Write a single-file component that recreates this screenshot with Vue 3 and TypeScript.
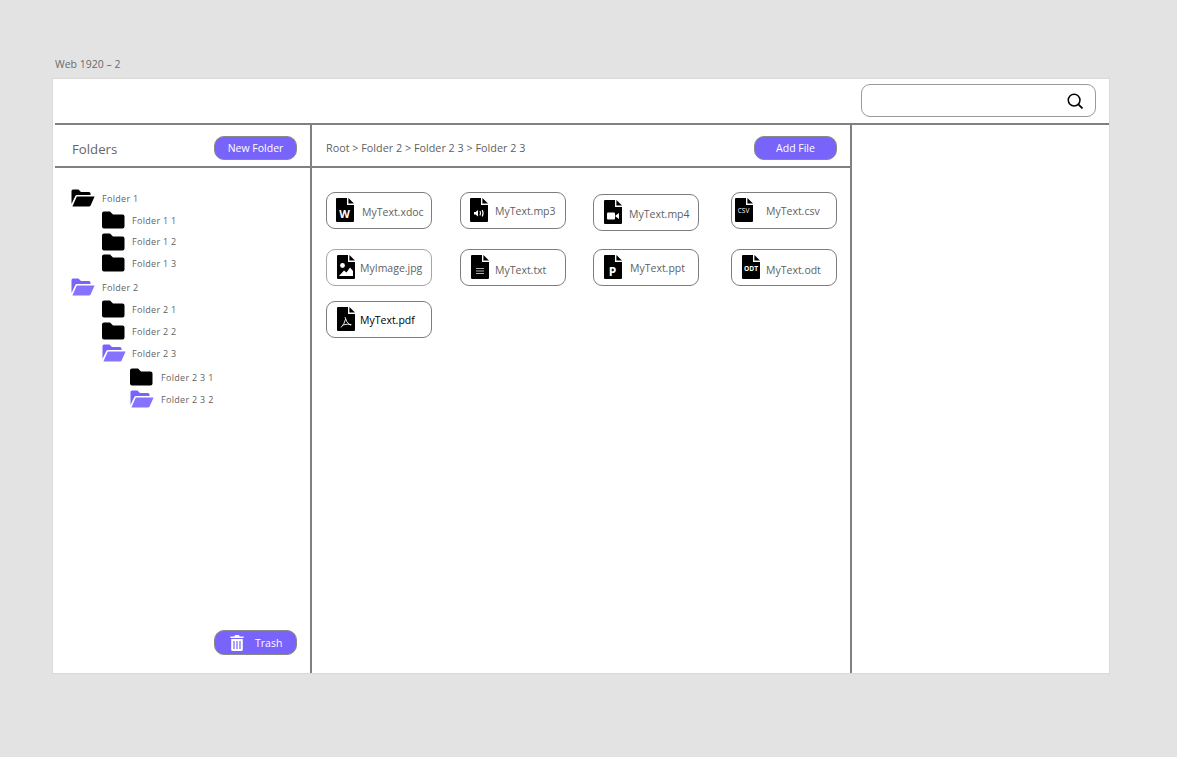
<template>
  <div class="page">
    <div class="frame-label">Web 1920 – 2</div>
    <div class="frame">
      <header class="topbar">
        <div class="search">
          <svg viewBox="0 0 18 18" width="16" height="16">
            <circle cx="8" cy="8" r="6.6" fill="none" stroke="#000" stroke-width="1.7" />
            <path d="M12.8 12.8 L16.8 16.8" stroke="#000" stroke-width="2" stroke-linecap="round" />
          </svg>
        </div>
      </header>
      <div class="columns">
        <aside class="sidebar">
          <div class="col-head">
            <span class="col-title">Folders</span>
            <button class="btn">New Folder</button>
          </div>
          <ul class="tree">
            <li
              v-for="f in folders"
              :key="f.name"
              class="tree-row"
              :class="[`depth-${f.depth}`, { tight: f.tight, spaced: f.spaced }]"
            >
              <svg class="folder" viewBox="0 0 24 18" width="24" height="18" :fill="f.active ? '#7864fb' : '#000'">
                <template v-if="f.open">
                  <path d="M0.5 2 Q0.5 0.5 2 0.5 H7.5 L10 3 H18 Q19.5 3 19.5 4.5 V6 H5.8 Q4.8 6 4.3 7 L0.5 15 Z" />
                  <path d="M5.8 7.4 H23.6 L19.6 16.4 Q19.2 17.5 18 17.5 H1.4 Z" :fill="f.active ? '#8572ff' : '#000'" />
                </template>
                <path v-else d="M2 0.5 H8 L11 3.5 H20.5 Q22.5 3.5 22.5 5.5 V15.5 Q22.5 17.5 20.5 17.5 H2 Q0 17.5 0 15.5 V2.5 Q0 0.5 2 0.5 Z" />
              </svg>
              <span class="tree-name">{{ f.name }}</span>
            </li>
          </ul>
          <div class="sidebar-foot">
            <button class="btn btn-trash">
              <svg viewBox="0 0 14 16" width="14" height="16" fill="#fff">
                <path d="M5 0 H9 L9.6 1.5 H13.6 V3 H0.4 V1.5 H4.4 Z" />
                <path d="M1.2 4 H12.8 V14.5 Q12.8 16 11.3 16 H2.7 Q1.2 16 1.2 14.5 Z M3.4 6 V14 H4.6 V6 Z M6.4 6 V14 H7.6 V6 Z M9.4 6 V14 H10.6 V6 Z" fill-rule="evenodd" />
              </svg>
              <span>Trash</span>
            </button>
          </div>
        </aside>

        <main class="main">
          <div class="col-head main-head">
            <span class="crumbs">Root &gt; Folder 2 &gt; Folder 2 3 &gt; Folder 2 3</span>
            <button class="btn">Add File</button>
          </div>
          <div class="files">
            <div
              v-for="file in files"
              :key="file.name"
              class="file-card"
              :class="file.cls"
              :style="{ paddingLeft: file.pad + 'px', gap: file.gap + 'px' }"
            >
              <svg class="doc" viewBox="0 0 18 24" width="18" height="24">
                <path d="M0 1 Q0 0 1 0 H11 V7 H18 V23 Q18 24 17 24 H1 Q0 24 0 23 Z" fill="#000" />
                <path d="M12.4 0 L18 5.6 H12.4 Z" fill="#000" />
                <text v-if="file.kind === 'word'" x="8.5" y="20" class="doc-letter" font-size="11">W</text>
                <text v-else-if="file.kind === 'ppt'" x="8.5" y="20.5" class="doc-letter" font-size="12">P</text>
                <text v-else-if="file.kind === 'csv'" x="8.5" y="15" class="doc-letter thin" font-size="6.5">CSV</text>
                <text v-else-if="file.kind === 'odt'" x="9" y="16" class="doc-letter" font-size="6.6">ODT</text>
                <g v-else-if="file.kind === 'audio'" fill="#fff">
                  <path d="M4 14 H5.6 L8 12 V18.5 L5.6 16.5 H4 Z" />
                  <path d="M10 13 Q11.2 15.3 10 17.5 M12.2 12 Q14 15.3 12.2 18.5" fill="none" stroke="#fff" stroke-width="1.1" />
                </g>
                <g v-else-if="file.kind === 'video'" fill="#fff">
                  <rect x="3" y="12.5" width="8" height="7" rx="1" />
                  <path d="M11.5 15.5 L15 13 V19 L11.5 16.5 Z" />
                </g>
                <g v-else-if="file.kind === 'image'" fill="#fff">
                  <circle cx="5.5" cy="10.5" r="2.4" />
                  <path d="M2 21 L7 15.5 L9.5 17.5 L13 12.5 L16 16 V21 Z" />
                </g>
                <path v-else-if="file.kind === 'text'" d="M5 13.5 H13 M5 16 H13 M5 18.5 H13" stroke="#c4c4c4" stroke-width="0.9" />
                <path v-else-if="file.kind === 'pdf'" d="M8 10 Q8.8 15 13.5 18.5 M8.6 12 Q7.5 17 4 20.5 M6 18 Q10 16.5 14.5 17.6" fill="none" stroke="#fff" stroke-width="0.9" />
              </svg>
              <span class="file-name">{{ file.name }}</span>
            </div>
          </div>
        </main>

        <section class="details"></section>
      </div>
    </div>
  </div>
</template>

<script setup lang="ts">
interface FolderRow {
  name: string;
  depth: number;
  open?: boolean;
  active?: boolean;
  tight?: boolean;
  spaced?: boolean;
}

interface FileItem {
  name: string;
  kind: string;
  pad: number;
  gap: number;
  cls?: string;
}

const folders: FolderRow[] = [
  { name: "Folder 1", depth: 0, open: true },
  { name: "Folder 1 1", depth: 1 },
  { name: "Folder 1 2", depth: 1, tight: true },
  { name: "Folder 1 3", depth: 1, tight: true },
  { name: "Folder 2", depth: 0, open: true, active: true, spaced: true },
  { name: "Folder 2 1", depth: 1 },
  { name: "Folder 2 2", depth: 1 },
  { name: "Folder 2 3", depth: 1, open: true, active: true },
  { name: "Folder 2 3 1", depth: 2, spaced: true },
  { name: "Folder 2 3 2", depth: 2, open: true, active: true },
];

const files: FileItem[] = [
  { name: "MyText.xdoc", kind: "word", pad: 9, gap: 8, cls: "drop-2" },
  { name: "MyText.mp3", kind: "audio", pad: 9, gap: 7 },
  { name: "MyText.mp4", kind: "video", pad: 10, gap: 7, cls: "shift drop-2" },
  { name: "MyText.csv", kind: "csv", pad: 3, gap: 13 },
  { name: "MyImage.jpg", kind: "image", pad: 10, gap: 5, cls: "light" },
  { name: "MyText.txt", kind: "text", pad: 10, gap: 6, cls: "drop-3" },
  { name: "MyText.ppt", kind: "ppt", pad: 10, gap: 8 },
  { name: "MyText.odt", kind: "odt", pad: 10, gap: 6, cls: "drop-3" },
  { name: "MyText.pdf", kind: "pdf", pad: 10, gap: 5, cls: "dark" },
];
</script>

<style scoped>
.page {
  width: 1177px;
  height: 757px;
  box-sizing: border-box;
  padding: 56px 67px 0 52px;
  background: #e3e3e3;
  font-family: "Open Sans", "Noto Sans", sans-serif;
  color: #5f5f5f;
  overflow: hidden;
}

.frame-label {
  height: 22px;
  box-sizing: border-box;
  padding: 1px 0 0 3px;
  font-size: 10.5px;
  line-height: 14px;
  color: #6a6a6a;
}

.frame {
  height: 596px;
  box-sizing: border-box;
  display: flex;
  flex-direction: column;
  background: #fff;
  border: 1px solid #d9d9d9;
  padding-left: 2px;
}

.topbar {
  height: 46px;
  flex: none;
  box-sizing: border-box;
  display: flex;
  justify-content: flex-end;
  padding: 5px 13px 0 0;
  border-bottom: 2px solid #808080;
}

.search {
  width: 235px;
  height: 33px;
  box-sizing: border-box;
  display: flex;
  align-items: center;
  justify-content: flex-end;
  padding-right: 12px;
  border: 1px solid #999;
  border-radius: 9px;
}

.columns {
  flex: 1;
  min-height: 0;
  display: flex;
}

.sidebar {
  width: 257px;
  flex: none;
  box-sizing: border-box;
  display: flex;
  flex-direction: column;
  border-right: 2px solid #808080;
}

.col-head {
  height: 43px;
  flex: none;
  box-sizing: border-box;
  display: flex;
  align-items: flex-start;
  justify-content: space-between;
  padding: 11px 13px 0 17px;
  border-bottom: 2px solid #808080;
}

.col-title {
  font-size: 13.2px;
  line-height: 26px;
  color: #666;
}

.btn {
  width: 83px;
  height: 24px;
  box-sizing: border-box;
  display: flex;
  align-items: center;
  justify-content: center;
  padding: 0;
  border: 1px solid #8a8a8a;
  border-radius: 10px;
  background: #7864fb;
  color: #fff;
  font-family: inherit;
  font-size: 10.5px;
}

.btn-trash {
  height: 25px;
  justify-content: flex-start;
  gap: 11px;
  padding-left: 15px;
}

.tree {
  list-style: none;
  margin: 0;
  padding: 19px 0 0 16px;
}

.tree-row {
  height: 22px;
  display: flex;
  align-items: center;
  gap: 7px;
}

.tree-row.tight {
  height: 21.5px;
}

.tree-row.spaced {
  margin-top: 2px;
}

.depth-1 {
  padding-left: 31px;
}

.tree-row.depth-1 {
  gap: 6px;
}

.depth-2 {
  padding-left: 59px;
}

.folder {
  flex: none;
}

.tree-name {
  font-size: 9px;
  letter-spacing: 0.3px;
  color: #5f5f5f;
}

.sidebar-foot {
  margin-top: auto;
  display: flex;
  justify-content: flex-end;
  padding: 0 13px 18px 0;
}

.main {
  width: 540px;
  flex: none;
  box-sizing: border-box;
  display: flex;
  flex-direction: column;
  border-right: 2px solid #808080;
}

.main-head {
  padding: 11px 13px 0 14px;
}

.crumbs {
  font-size: 10.8px;
  line-height: 24px;
  color: #5f5f5f;
}

.files {
  display: grid;
  grid-template-columns: 134px 133px 138px 106px;
  grid-auto-rows: min-content;
  row-gap: 16px;
  padding: 24px 0 0 14px;
}

.files > :nth-child(n + 5) {
  margin-top: 4px;
}

.files > :nth-child(n + 9) {
  margin-top: -1px;
}

.file-card {
  width: 106px;
  height: 37px;
  box-sizing: border-box;
  display: flex;
  align-items: center;
  border: 1px solid #7d7d7d;
  border-radius: 9px;
}

.file-card.shift {
  margin-top: 2px;
  margin-bottom: -2px;
}

.file-card.light {
  border-color: #a5a5a5;
}

.file-card.dark .file-name {
  color: #000;
}

.file-card.drop-2 .file-name {
  margin-top: 3px;
}

.file-card.drop-3 .file-name {
  margin-top: 5px;
}

.doc {
  flex: none;
  margin-bottom: 2px;
}

.doc-letter {
  fill: #fff;
  text-anchor: middle;
  font-family: "Open Sans", sans-serif;
  font-weight: 700;
}

.doc-letter.thin {
  font-weight: 400;
}

.file-name {
  font-size: 10.5px;
  color: #5f5f5f;
  white-space: nowrap;
}

.details {
  flex: 1;
}
</style>
